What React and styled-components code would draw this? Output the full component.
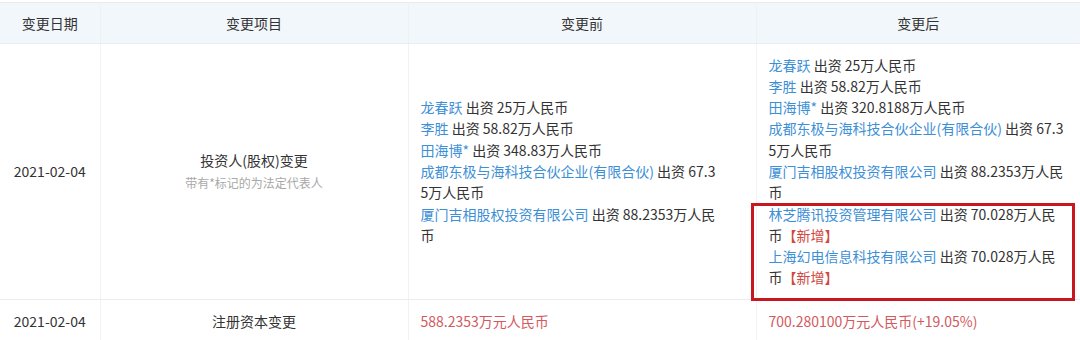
import React from 'react';
import styled, { createGlobalStyle } from 'styled-components';

const GlobalStyle = createGlobalStyle`
  html, body {
    margin: 0;
    padding: 0;
    background: #fff;
  }
  body {
    font-family: "Noto Sans CJK SC", "Liberation Sans", sans-serif;
    font-size: 14px;
    color: #333;
  }
`;

const Page = styled.div`
  width: 1080px;
  padding-top: 2px;
  overflow: hidden;
`;

const Table = styled.table`
  width: 1080px;
  border-collapse: collapse;
  table-layout: fixed;
  border-top: 1px solid #e6ebf0;
`;

const HeadCell = styled.th`
  height: 40px;
  padding: 0 12px;
  background: #f2f7fc;
  font-weight: normal;
  text-align: center;
  border-bottom: 1px solid #e9edf1;
  border-left: 1px solid #eef1f4;
  &:first-child {
    border-left: none;
  }
`;

const Cell = styled.td`
  padding: 10.5px 12px;
  line-height: 21.3px;
  vertical-align: middle;
  text-align: ${(p) => p.$align || 'left'};
  border-bottom: 1px solid #eaedf0;
  border-left: 1px solid #f0f2f4;
  &:first-child {
    border-left: none;
  }
`;

const Note = styled.div`
  font-size: 12px;
  color: #a8a8a8;
`;

const List = styled.div`
  width: 297px;
  word-break: break-all;
`;

const Entry = styled.div``;

const Name = styled.span`
  color: #3d8fd6;
`;

const Tag = styled.span`
  color: #d2473f;
`;

const Money = styled.span`
  color: #d25a5e;
`;

const Highlight = styled.div`
  position: relative;
  &::after {
    content: '';
    position: absolute;
    top: -1px;
    bottom: -12px;
    left: -18px;
    right: -9px;
    border: 3px solid #c8171e;
    pointer-events: none;
  }
`;

const before = [
  ['龙春跃', '25'],
  ['李胜', '58.82'],
  ['田海博*', '348.83'],
  ['成都东极与海科技合伙企业(有限合伙)', '67.35'],
  ['厦门吉相股权投资有限公司', '88.2353'],
];

const after = [
  ['龙春跃', '25'],
  ['李胜', '58.82'],
  ['田海博*', '320.8188'],
  ['成都东极与海科技合伙企业(有限合伙)', '67.35'],
  ['厦门吉相股权投资有限公司', '88.2353'],
];

const added = [
  ['林芝腾讯投资管理有限公司', '70.028'],
  ['上海幻电信息科技有限公司', '70.028'],
];

function Holder({ name, amount, isNew }) {
  return (
    <Entry>
      <Name>{name}</Name> 出资 {amount}万人民币
      {isNew && <Tag>【新增】</Tag>}
    </Entry>
  );
}

export default function App() {
  return (
    <Page>
      <GlobalStyle />
      <Table>
        <colgroup>
          <col style={{ width: 100 }} />
          <col style={{ width: 308 }} />
          <col style={{ width: 348 }} />
          <col style={{ width: 324 }} />
        </colgroup>
        <thead>
          <tr>
            <HeadCell>变更日期</HeadCell>
            <HeadCell>变更项目</HeadCell>
            <HeadCell>变更前</HeadCell>
            <HeadCell>变更后</HeadCell>
          </tr>
        </thead>
        <tbody>
          <tr>
            <Cell $align="center">2021-02-04</Cell>
            <Cell $align="center">
              <div>投资人(股权)变更</div>
              <Note>带有*标记的为法定代表人</Note>
            </Cell>
            <Cell>
              <List>
                {before.map(([n, a]) => (
                  <Holder key={n} name={n} amount={a} />
                ))}
              </List>
            </Cell>
            <Cell>
              <List>
                {after.map(([n, a]) => (
                  <Holder key={n} name={n} amount={a} />
                ))}
                <Highlight>
                  {added.map(([n, a]) => (
                    <Holder key={n} name={n} amount={a} isNew />
                  ))}
                </Highlight>
              </List>
            </Cell>
          </tr>
          <tr>
            <Cell $align="center">2021-02-04</Cell>
            <Cell $align="center">注册资本变更</Cell>
            <Cell>
              <Money>588.2353万元人民币</Money>
            </Cell>
            <Cell>
              <Money>700.280100万元人民币(+19.05%)</Money>
            </Cell>
          </tr>
        </tbody>
      </Table>
    </Page>
  );
}
